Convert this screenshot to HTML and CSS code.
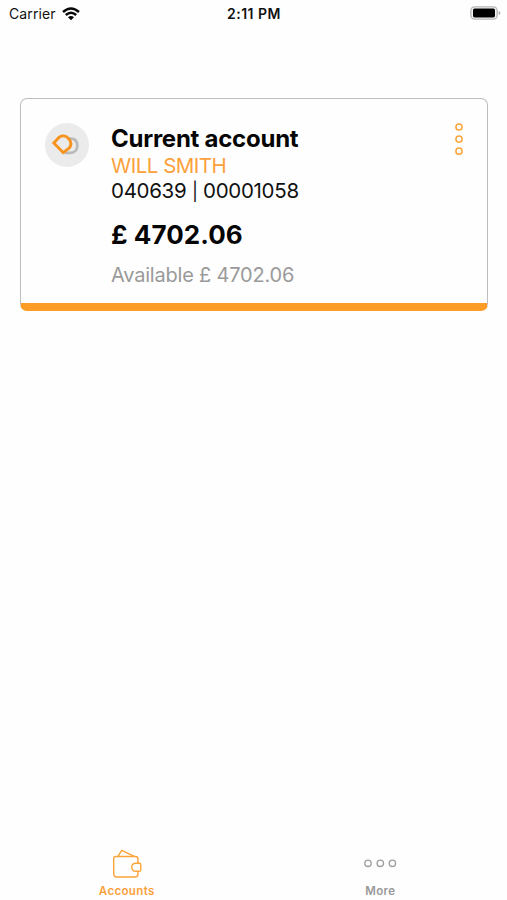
FILE: index.html
```html
<!DOCTYPE html>
<html lang="en">
<head>
<meta charset="utf-8">
<title>Accounts</title>
<link rel="stylesheet" href="styles.css">
</head>
<body>
<div class="app">
  <header class="status">
    <div class="status-left">
      <span class="carrier">Carrier</span>
      <svg class="wifi" width="18" height="14" viewBox="0 0 18 14" fill="none" stroke="#080808" stroke-width="2.5">
        <path d="M1 5Q9-2 17 5M3.8 8Q9 3.5 14.2 8"/>
        <path d="M6 10.2Q9 8 12 10.2L9 13.3Z" fill="#080808" stroke="none"/>
      </svg>
    </div>
    <span class="time">2:11 PM</span>
    <div class="status-right">
      <svg class="battery" width="31" height="14" viewBox="0 0 31 14">
        <rect x=".9" y=".9" width="26.2" height="12.2" rx="3.6" fill="#f4f4f4" stroke="#b8b8b8" stroke-width="1.4"/>
        <rect x="3" y="2.6" width="22" height="8.8" rx="1.6" fill="#000"/>
        <path d="M28.6 5Q30.4 5.5 30.4 7T28.6 9Z" fill="#aaa"/>
      </svg>
    </div>
  </header>
  <main class="content">
    <section class="card">
      <svg class="logo" width="44" height="44" viewBox="0 0 44 44" fill="none">
        <circle cx="22" cy="22" r="22" fill="#ebebeb"/>
        <path d="M24 15.6H25.5C30 15.6 32.3 18.5 32.3 22.7S29.5 29.8 25.5 29.8H19.5" stroke="#b9b9b9" stroke-width="2.7"/>
        <path d="M8.8 20L14.2 14.2C17 12.4 21 12.4 23.6 15.6C26.6 19.2 26.2 22.8 24 25.2L18.2 29.6Z" fill="#ebebeb" stroke="#f7941f" stroke-width="2.9"/>
      </svg>
      <div class="details">
        <h1 class="title">Current account</h1>
        <div class="holder">WILL SMITH</div>
        <div class="number">040639 <span class="divider">|</span> 00001058</div>
        <div class="balance">£ 4702.06</div>
        <div class="available">Available £ 4702.06</div>
      </div>
      <svg class="menu" width="10" height="34" viewBox="0 0 10 34" fill="none" stroke="#fba43a" stroke-width="1.5">
        <circle cx="5" cy="5" r="3.1"/><circle cx="5" cy="17.1" r="3.1"/><circle cx="5" cy="29.2" r="3.1"/>
      </svg>
    </section>
  </main>
  <nav class="tabs">
    <div class="tab active">
      <svg width="32" height="30" viewBox="0 0 32 30" fill="none" stroke="#fba43a" stroke-width="1.4" stroke-linejoin="round">
        <path d="M27 14V10Q27 7.5 24.5 7.5H4.7Q2.7 7.5 2.7 9.5V24.5Q2.7 28 6 28H23.7Q27 28 27 25V22.3"/>
        <path d="M7 7.4L10.7 1.3L23.3 7.4"/>
        <path d="M28.2 14.2H25Q20.8 14.2 20.8 18.2T25 22.3H28.2Q29.8 22.3 29.8 20.7V15.8Q29.8 14.2 28.2 14.2Z"/>
      </svg>
      <span class="label">Accounts</span>
    </div>
    <div class="tab">
      <svg width="34" height="30" viewBox="0 0 34 30" fill="none" stroke="#a0a0a0" stroke-width="1.4">
        <circle cx="5" cy="14.3" r="3.2"/><circle cx="17.3" cy="14.3" r="3.2"/><circle cx="29.4" cy="14.3" r="3.2"/>
      </svg>
      <span class="label">More</span>
    </div>
  </nav>
</div>
</body>
</html>
```

FILE: styles.css
```css
* { box-sizing: border-box; }
body {
  margin: 0;
  background: #fefefe;
  color: #111;
  font-family: Inter, "Liberation Sans", sans-serif;
}
.app {
  height: 900px;
  display: flex;
  flex-direction: column;
  overflow: hidden;
}
.status {
  height: 28px;
  display: grid;
  grid-template-columns: 1fr auto 1fr;
  align-items: center;
  padding: 0 6px 1px 7px;
  font-size: 14px;
  line-height: 20px;
}
.status-left { display: flex; align-items: center; gap: 6px; padding-left: 2px; }
.status-right { display: flex; justify-content: flex-end; }
.battery { margin-bottom: 1px; }
.carrier { letter-spacing: 0.1px; }
.time { font-weight: 600; letter-spacing: 0.5px; }
.content { flex: 1; padding: 70px 19px 0 20px; }
.card {
  height: 213px;
  display: flex;
  align-items: flex-start;
  border: 1px solid #bcbcbc;
  border-bottom: 8px solid #fd9c27;
  border-radius: 7px;
  padding: 24px 23px 0 24px;
}
.menu { margin-top: -1px; }
.details { flex: 1; padding-left: 22px; white-space: nowrap; }
.title { margin: 0; padding-top: 1px; font-size: 24px; font-weight: 650; line-height: 29px; color: #050505; letter-spacing: -0.25px; }
.holder { font-size: 20.5px; line-height: 25px; color: #fba13c; letter-spacing: -0.5px; }
.number { font-size: 20.5px; line-height: 25px; letter-spacing: -0.3px; }
.divider { font-size: 18px; }
.balance { margin-top: 15px; font-size: 26px; font-weight: 650; line-height: 32px; color: #050505; letter-spacing: 0.05px; }
.available { margin-top: 11px; font-size: 20px; line-height: 26px; color: #9a9a9a; letter-spacing: -0.2px; }
.tabs {
  height: 51px;
  display: grid;
  grid-template-columns: 1fr 1fr;
}
.tab {
  display: flex;
  flex-direction: column;
  align-items: center;
  gap: 5px;
  color: #999;
}
.active { color: #fba13c; }
.label { font-size: 11.5px; font-weight: 600; line-height: 15px; letter-spacing: 0.35px; }
```
